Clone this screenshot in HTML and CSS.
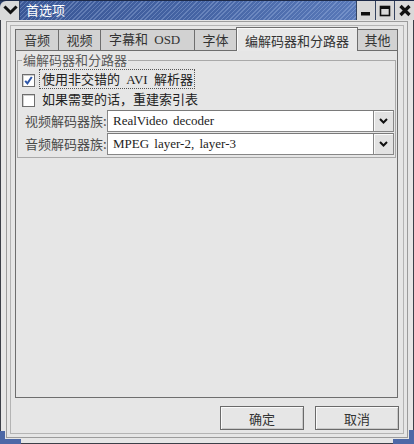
FILE: index.html
```html
<!DOCTYPE html>
<html lang="zh-CN">
<head>
<meta charset="utf-8">
<title>首选项</title>
<link rel="stylesheet" href="styles.css">
</head>
<body>
<div class="window">
  <div class="titlebar">
    <div class="tb-menu">
      <svg width="20" height="20" viewBox="0 0 20 20"><path d="M6.5 7.5 L11.5 12.5 L16.5 7.5" fill="none" stroke="#111" stroke-width="3" stroke-linecap="square"/></svg>
    </div>
    <div class="tb-title">首选项</div>
    <div class="tb-btns">
      <div class="tb-btn"><svg width="18" height="18" viewBox="0 0 18 18"><rect x="4" y="11" width="9" height="3.5" fill="#111"/></svg></div>
      <div class="tb-btn"><svg width="18" height="18" viewBox="0 0 18 18"><rect x="4.5" y="5.5" width="9" height="9" fill="none" stroke="#111" stroke-width="1.6"/><rect x="4" y="5" width="10" height="3" fill="#111"/></svg></div>
      <div class="tb-btn tb-close"><svg width="20" height="18" viewBox="0 0 20 18"><path d="M5.5 5 L14.5 14 M14.5 5 L5.5 14" stroke="#111" stroke-width="3.2"/></svg></div>
    </div>
  </div>
  <div class="wbody">
    <div class="outer">
      <div class="inner">
        <div class="notebook">
          <div class="tabs">
            <div class="tab t-audio">音频</div>
            <div class="tab t-video">视频</div>
            <div class="tab t-sub">字幕和 OSD</div>
            <div class="tab t-font">字体</div>
            <div class="tab tab-active t-codec">编解码器和分路器</div>
            <div class="tab t-misc">其他</div>
          </div>
          <div class="page">
            <fieldset class="frame">
              <legend class="frame-label">编解码器和分路器</legend>
              <label class="check">
                <span class="box"><svg width="11" height="11" viewBox="0 0 11 11"><path d="M2.2 5.8 L4.4 8.4 L8.8 2" fill="none" stroke="#2d56a8" stroke-width="2"/></svg></span>
                <span class="ctext focused">使用非交错的 AVI 解析器</span>
              </label>
              <label class="check">
                <span class="box"></span>
                <span class="ctext">如果需要的话，重建索引表</span>
              </label>
              <div class="combos">
                <span class="clabel">视频解码器族:</span>
                <div class="combo">
                  <span class="cval">RealVideo decoder</span>
                  <span class="cbtn"><svg width="9" height="6" viewBox="0 0 9 6"><path d="M1 1 L4.5 4.5 L8 1" fill="none" stroke="#111" stroke-width="2"/></svg></span>
                </div>
                <span class="clabel">音频解码器族:</span>
                <div class="combo">
                  <span class="cval">MPEG layer-2, layer-3</span>
                  <span class="cbtn"><svg width="9" height="6" viewBox="0 0 9 6"><path d="M1 1 L4.5 4.5 L8 1" fill="none" stroke="#111" stroke-width="2"/></svg></span>
                </div>
              </div>
            </fieldset>
          </div>
        </div>
        <div class="buttons">
          <button class="btn">确定</button>
          <button class="btn">取消</button>
        </div>
      </div>
    </div>
  </div>
  <div class="corner corner-left"></div>
  <div class="corner corner-right"></div>
</div>
</body>
</html>
```
FILE: styles.css
```css
* { box-sizing: border-box; }
html, body { margin: 0; padding: 0; background: #e6e6e6; }
body {
  font-family: "Liberation Serif", "Noto Sans CJK SC", serif;
  font-size: 13px;
  color: #2a2a2a;
}
.window {
  position: relative;
  width: 414px;
  height: 444px;
  display: flex;
  flex-direction: column;
  background: #e6e6e6;
}
.titlebar {
  height: 20px;
  display: flex;
  background: #2a3d66;
  border-top: 1px solid #1d2a48;
}
.tb-menu {
  width: 20px;
  height: 19px;
  background: #d9d9d9;
  border-top-left-radius: 6px;
  border-right: 1px solid #33425f;
}
.tb-menu svg { display: block; margin-top: -1px; margin-left: -1px; }
.tb-title {
  flex: 1;
  height: 19px;
  padding-left: 6px;
  line-height: 18px;
  color: #ffffff;
  font-family: "Noto Sans CJK SC", sans-serif;
  font-size: 13px;
  background:
    repeating-linear-gradient(135deg, rgba(255,255,255,0) 0 2px, rgba(190,210,245,0.28) 2px 3px),
    linear-gradient(90deg, #3a5796 0%, #4463a3 50%, #5878b8 100%);
}
.tb-btns { display: flex; }
.tb-btn {
  width: 19px;
  height: 19px;
  background: #d9d9d9;
  border-left: 1px solid #33425f;
}
.tb-btn svg { display: block; }
.tb-close { width: 20px; }
.wbody {
  flex: 1;
  display: flex;
  flex-direction: column;
  border: 1px solid #3b3f48;
  border-top: none;
}
.outer {
  flex: 1;
  display: flex;
  flex-direction: column;
  margin: 1px 5px 5px 5px;
  border: 1px solid #9c9c9c;
  padding: 3px;
}
.inner {
  flex: 1;
  display: flex;
  flex-direction: column;
  border: 1px solid #b4b4b4;
  padding: 1px 5px 3px 4px;
}
.notebook {
  flex: 1;
  display: flex;
  flex-direction: column;
}
.tabs {
  display: flex;
  align-items: flex-end;
  height: 24px;
  position: relative;
  z-index: 1;
}
.tab {
  height: 21px;
  margin-bottom: 1px;
  border: 1px solid #6e6e6e;
  border-bottom: none;
  background: #d2d2d2;
  font-family: "Noto Sans CJK SC", sans-serif;
  font-size: 13px;
  line-height: 20px;
  text-align: center;
  color: #333;
  white-space: nowrap;
}
.tab + .tab { margin-left: -1px; }
.tab-active {
  height: 24px;
  margin-bottom: 0;
  background: #e8e8e8;
  box-shadow: inset 1px 1px 0 #fafafa;
  line-height: 25px;
  position: relative;
  z-index: 2;
}
.t-audio { width: 44px; }
.t-video { width: 43px; }
.t-sub {
  width: 95px;
  text-align: left;
  padding-left: 8px;
  word-spacing: 3px;
  font-family: "Liberation Serif", "Noto Sans CJK SC", serif;
}
.t-font { width: 43px; }
.t-codec { width: 122px; }
.t-misc { width: 41px; }
.page {
  flex: 1;
  margin-top: -1px;
  border: 1px solid #6e6e6e;
  background: #e6e6e6;
  padding: 2px 1px 0 1px;
}
.frame {
  margin: 0;
  padding: 0 1px 2px 4px;
  border: 1px solid #a9a9a9;
  min-width: 0;
}
.frame-label {
  padding: 0 1px;
  margin-left: 0;
  font-family: "Noto Sans CJK SC", sans-serif;
  font-size: 13px;
  line-height: 14px;
  color: #5a5a5a;
}
.check {
  display: flex;
  align-items: center;
  height: 20px;
}
.check:first-of-type { margin-top: 2px; }
.box {
  width: 13px;
  height: 13px;
  margin-top: 3px;
  border: 1px solid #6e6e6e;
  background: #fff;
  box-shadow: inset 1px 1px 0 #cfcfcf;
  display: flex;
  align-items: center;
  justify-content: center;
}
.box svg { display: block; }
.ctext {
  margin-left: 4px;
  padding: 2px 1px 1px 2px;
  font-family: "Liberation Serif", "Noto Sans CJK SC", serif;
  line-height: 15px;
  word-spacing: 3px;
  border: 1px solid transparent;
  color: #222;
}
.ctext.focused { border: 1px dotted #555; }
.combos {
  display: grid;
  grid-template-columns: 85px 1fr;
  row-gap: 1px;
  margin-top: 1px;
}
.clabel {
  padding-left: 3px;
  line-height: 22px;
  font-family: "Noto Sans CJK SC", sans-serif;
  color: #4a4a4a;
  white-space: nowrap;
}
.combo {
  height: 22px;
  display: flex;
  border: 1px solid #878787;
  border-top-color: #7a7a7a;
  background: #fff;
}
.cval {
  flex: 1;
  padding-left: 5px;
  line-height: 20px;
  color: #222;
  word-spacing: 2px;
  font-family: "Liberation Serif", "Noto Sans CJK SC", serif;
}
.cbtn {
  width: 20px;
  background: #e2e2e2;
  border-left: 1px solid #878787;
  box-shadow: inset 1px 1px 0 #fafafa;
  display: flex;
  align-items: center;
  justify-content: center;
}
.buttons {
  display: flex;
  justify-content: flex-end;
  gap: 11px;
  margin-top: 8px;
  margin-right: -1px;
}
.btn {
  width: 84px;
  height: 24px;
  margin: 0;
  padding: 0;
  border: 1px solid #6a6a6a;
  background: #e6e6e6;
  box-shadow: inset 1px 1px 0 #fafafa, inset -1px -1px 0 #c8c8c8;
  font-family: "Noto Sans CJK SC", sans-serif;
  font-size: 13px;
  color: #333;
}
.corner {
  position: absolute;
  bottom: 0;
  width: 21px;
  height: 13px;
}
.corner-left {
  left: 0;
  border-left: 5px solid #4d68a6;
  border-bottom: 5px solid #4d68a6;
}
.corner-right {
  right: 0;
  height: 14px;
  border-right: 5px solid #4d68a6;
  border-bottom: 5px solid #4d68a6;
}
```
